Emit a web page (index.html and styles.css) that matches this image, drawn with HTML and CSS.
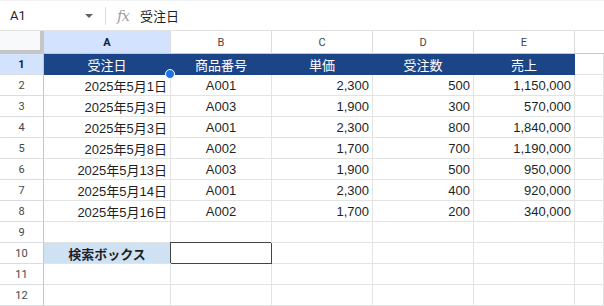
FILE: index.html
```html
<!DOCTYPE html>
<html lang="ja">
<head>
<meta charset="utf-8">
<link rel="stylesheet" href="styles.css">
</head>
<body>
<div class="topbar">
  <div class="namebox">A1</div>
  <div class="caret"></div>
  <div class="sep"></div>
  <div class="fx">fx</div>
  <div class="formula">受注日</div>
</div>
<div class="sheet">
  <div class="c corner"></div>
  <div class="c ch sel">A</div>
  <div class="c ch">B</div>
  <div class="c ch">C</div>
  <div class="c ch">D</div>
  <div class="c ch">E</div>
  <div class="c ch rest"></div>

  <div class="c rh sel">1</div>
  <div class="c hd">受注日</div>
  <div class="c hd">商品番号</div>
  <div class="c hd">単価</div>
  <div class="c hd">受注数</div>
  <div class="c hd">売上</div>
  <div class="c"></div>

  <div class="c rh">2</div>
  <div class="c r">2025年5月1日</div>
  <div class="c m">A001</div>
  <div class="c r">2,300</div>
  <div class="c r">500</div>
  <div class="c r">1,150,000</div>
  <div class="c"></div>

  <div class="c rh">3</div>
  <div class="c r">2025年5月3日</div>
  <div class="c m">A003</div>
  <div class="c r">1,900</div>
  <div class="c r">300</div>
  <div class="c r">570,000</div>
  <div class="c"></div>

  <div class="c rh">4</div>
  <div class="c r">2025年5月3日</div>
  <div class="c m">A001</div>
  <div class="c r">2,300</div>
  <div class="c r">800</div>
  <div class="c r">1,840,000</div>
  <div class="c"></div>

  <div class="c rh">5</div>
  <div class="c r">2025年5月8日</div>
  <div class="c m">A002</div>
  <div class="c r">1,700</div>
  <div class="c r">700</div>
  <div class="c r">1,190,000</div>
  <div class="c"></div>

  <div class="c rh">6</div>
  <div class="c r">2025年5月13日</div>
  <div class="c m">A003</div>
  <div class="c r">1,900</div>
  <div class="c r">500</div>
  <div class="c r">950,000</div>
  <div class="c"></div>

  <div class="c rh">7</div>
  <div class="c r">2025年5月14日</div>
  <div class="c m">A001</div>
  <div class="c r">2,300</div>
  <div class="c r">400</div>
  <div class="c r">920,000</div>
  <div class="c"></div>

  <div class="c rh">8</div>
  <div class="c r">2025年5月16日</div>
  <div class="c m">A002</div>
  <div class="c r">1,700</div>
  <div class="c r">200</div>
  <div class="c r">340,000</div>
  <div class="c"></div>

  <div class="c rh">9</div>
  <div class="c"></div><div class="c"></div><div class="c"></div><div class="c"></div><div class="c"></div><div class="c"></div>

  <div class="c rh">10</div>
  <div class="c label">検索ボックス</div>
  <div class="c box"></div>
  <div class="c"></div><div class="c"></div><div class="c"></div><div class="c"></div>

  <div class="c rh">11</div>
  <div class="c"></div><div class="c"></div><div class="c"></div><div class="c"></div><div class="c"></div><div class="c"></div>

  <div class="c rh">12</div>
  <div class="c"></div><div class="c"></div><div class="c"></div><div class="c"></div><div class="c"></div><div class="c"></div>

  <div class="handle"></div>
</div>
</body>
</html>
```

FILE: styles.css
```css
* { box-sizing: border-box; }
html, body { margin: 0; padding: 0; background: #fff; }
body {
  width: 604px;
  height: 306px;
  overflow: hidden;
  font-family: "Liberation Sans", Arial, "Noto Sans CJK JP", sans-serif;
  color: #1f1f1f;
}
.topbar {
  height: 31px;
  border-top: 1px solid #f1f3f4;
  border-bottom: 1px solid #e1e3e1;
  display: flex;
  align-items: center;
  position: relative;
}
.namebox {
  font-family: Roboto, "Liberation Sans", sans-serif;
  font-size: 13px;
  margin-left: 10px;
  width: 75px;
  color: #1f1f1f;
}
.caret {
  width: 0;
  height: 0;
  border-left: 4px solid transparent;
  border-right: 4px solid transparent;
  border-top: 4px solid #5f6368;
  margin-left: 0px;
}
.sep {
  width: 1px;
  height: 18px;
  background: #dadce0;
  margin-left: 12px;
}
.fx {
  font-family: "DejaVu Serif", "Liberation Serif", serif;
  font-style: italic;
  font-size: 15px;
  color: #a0a0a0;
  margin-left: 11px;
  letter-spacing: -1px;
}
.formula {
  font-family: "Noto Sans CJK JP", sans-serif;
  font-size: 13px;
  margin-left: 11px;
  color: #1f1f1f;
}
.sheet {
  position: relative;
  display: grid;
  grid-template-columns: 44px 127px 101px 101px 101px 101px 1fr;
  grid-template-rows: 23px;
  grid-auto-rows: 21px;
}
.c {
  border-right: 1px solid #e2e3e3;
  border-bottom: 1px solid #e2e3e3;
  font-size: 13px;
  display: flex;
  align-items: center;
  white-space: nowrap;
  font-family: "Liberation Sans", Arial, "Noto Sans CJK JP", sans-serif;
}
.corner {
  background: #f8f9fa;
  border-right: 4px solid #c4c7c5;
  border-bottom: 4px solid #c4c7c5;
}
.ch {
  justify-content: center;
  font-family: Roboto, "Liberation Sans", sans-serif;
  font-size: 11px;
  color: #444746;
  border-right: 1px solid #dadce0;
  border-bottom: 1px solid #c4c7c5;
}
.ch.rest { border-right: none; }
.rh {
  justify-content: center;
  font-family: Roboto, "Liberation Sans", sans-serif;
  font-size: 11px;
  color: #444746;
  border-right: 1px solid #c4c7c5;
  border-bottom: 1px solid #dadce0;
}
.sel {
  background: #d3e3fd;
  color: #0b1f45;
  font-weight: bold;
}
.hd {
  background: #1c4587;
  color: #fff;
  justify-content: center;
  border-right-color: #1c4587;
  border-bottom-color: #1c4587;
}
.hd:first-of-type { border-right-color: #3d6bc4; }
.r { justify-content: flex-end; padding-right: 3px; }
.m { justify-content: center; }
.label {
  background: #cfe2f3;
  font-weight: bold;
  justify-content: center;
}
.box {
  border-right: 1px solid #444;
  border-bottom: 1px solid #444;
  box-shadow: -1px -1px 0 #444;
}
.handle {
  position: absolute;
  left: 165px;
  top: 38px;
  width: 10px;
  height: 10px;
  border-radius: 50%;
  background: #1a73e8;
  border: 1px solid #fff;
}
```
